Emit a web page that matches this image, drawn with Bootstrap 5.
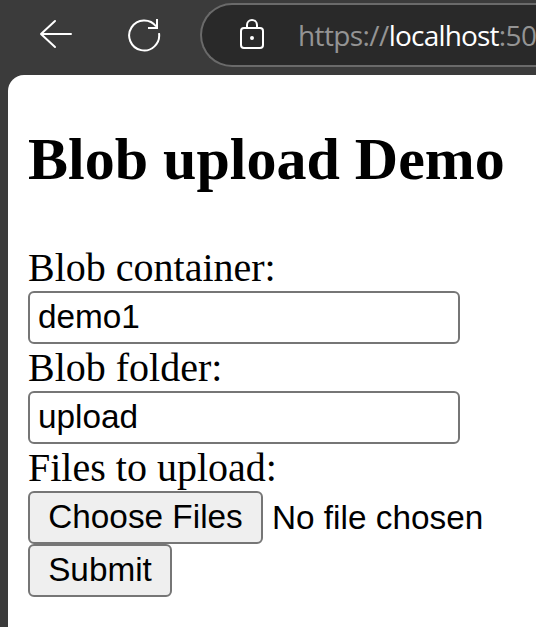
<!DOCTYPE html>
<html lang="en">
<head>
<meta charset="utf-8">
<title>Blob upload Demo</title>
<link href="https://cdn.jsdelivr.net/npm/bootstrap@5.3.0/dist/css/bootstrap.min.css" rel="stylesheet">
<style>
html, body { height: 100%; }
body { background: #3b3b3b; color: #000; }
.toolbar { height: 75px; padding-left: 39px; }
.toolbar svg { display: block; flex: none; fill: none; stroke: #fff; stroke-width: 2; stroke-linecap: round; stroke-linejoin: round; }
.reload-icon { margin-left: 54px; }
.address { height: 64px; margin: 3px 0 0 39px; padding-left: 36px; background: #292929; border: 2px solid #6a6a6a; border-right: 0; border-radius: 32px 0 0 32px; }
.url { margin-left: 32px; font: 28px/38px "Open Sans", "Noto Sans", sans-serif; color: #949494; letter-spacing: -.6px; white-space: nowrap; }
.url .host { color: #fff; letter-spacing: -.8px; }
.page { margin-left: 8px; padding: 51px 0 0 20px; border-top-left-radius: 16px; font-family: "Liberation Serif", "Times New Roman", serif; }
.page h2 { font-size: 60px; line-height: 66px; margin-bottom: 52px; font-weight: 700; white-space: nowrap; }
.field-label { font-size: 40px; line-height: 47px; height: 47px; }
.control { height: 53px; font: 33.333px/37px "Liberation Sans", Arial, sans-serif; color: #000; border: 2px solid #767676; border-radius: 6px; padding: 5px 8px 7px; }
.control.form-control { width: 432px; }
.control.btn { background: #efefef; padding: 5px 18px 7px; white-space: nowrap; }
.choose { width: 235px; }
.submit { width: 144px; }
.file-status { font: 33.333px/53px "Liberation Sans", Arial, sans-serif; margin-left: 9px; white-space: nowrap; }
</style>
</head>
<body class="d-flex flex-column overflow-hidden">
<header class="toolbar d-flex align-items-start flex-shrink-0">
  <svg class="mt-3" width="34" height="36" viewBox="39 16 34 36" aria-label="Back"><path d="M71 34H41M55 21L41 34L55 47"/></svg>
  <svg class="reload-icon mt-3" width="34" height="38" viewBox="127 16 34 38" aria-label="Reload"><path stroke-linecap="butt" d="M159 33.2A15 15 0 1 1 156.2 26.5"/><path stroke-linecap="butt" stroke-linejoin="miter" d="M157 19V28H148"/></svg>
  <div class="address d-flex align-items-center flex-grow-1">
    <svg width="28" height="34" viewBox="238 18 28 34" aria-label="Secure"><rect x="241" y="28" width="22" height="20" rx="3"/><path d="M247 27V25a5 5 0 0 1 10 0V27"/><circle cx="252" cy="38" r="1" fill="#fff"/></svg>
    <div class="url">https://<span class="host">localhost</span>:50</div>
  </div>
</header>
<main class="page bg-white flex-grow-1">
  <h2 class="mt-0">Blob upload Demo</h2>
  <form>
    <label class="field-label d-block" for="container-name">Blob container:</label>
    <input class="control form-control" id="container-name" type="text" value="demo1">
    <label class="field-label d-block" for="folder-name">Blob folder:</label>
    <input class="control form-control" id="folder-name" type="text" value="upload">
    <div class="field-label">Files to upload:</div>
    <div class="d-flex">
      <button class="control btn choose" type="button">Choose Files</button>
      <span class="file-status">No file chosen</span>
    </div>
    <button class="control btn submit d-block" type="button">Submit</button>
  </form>
</main>
<script src="https://cdn.jsdelivr.net/npm/bootstrap@5.3.0/dist/js/bootstrap.bundle.min.js"></script>
</body>
</html>
